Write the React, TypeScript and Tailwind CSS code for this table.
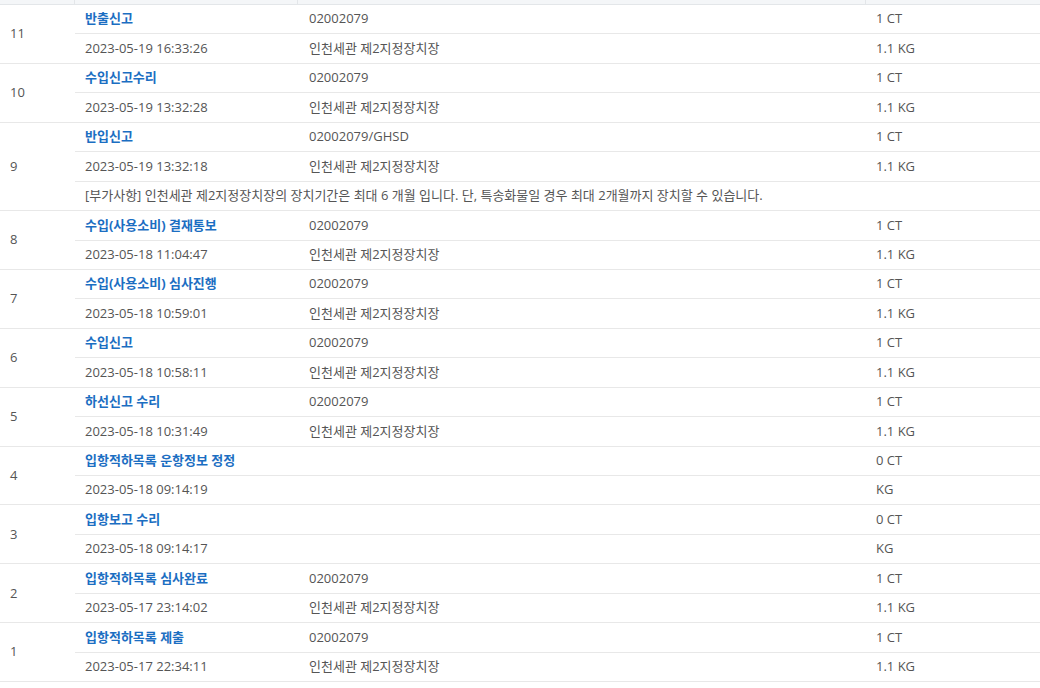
type Row = {
  no: number;
  title: string;
  hbl: string;
  pkg: string;
  date: string;
  place: string;
  weight: string;
  note?: string;
};

const PLACE = '인천세관 제2지정장치장';

const rows: Row[] = [
  { no: 11, title: '반출신고', hbl: '02002079', pkg: '1 CT', date: '2023-05-19 16:33:26', place: PLACE, weight: '1.1 KG' },
  { no: 10, title: '수입신고수리', hbl: '02002079', pkg: '1 CT', date: '2023-05-19 13:32:28', place: PLACE, weight: '1.1 KG' },
  {
    no: 9,
    title: '반입신고',
    hbl: '02002079/GHSD',
    pkg: '1 CT',
    date: '2023-05-19 13:32:18',
    place: PLACE,
    weight: '1.1 KG',
    note: '[부가사항] 인천세관 제2지정장치장의 장치기간은 최대 6 개월 입니다. 단, 특송화물일 경우 최대 2개월까지 장치할 수 있습니다.',
  },
  { no: 8, title: '수입(사용소비) 결재통보', hbl: '02002079', pkg: '1 CT', date: '2023-05-18 11:04:47', place: PLACE, weight: '1.1 KG' },
  { no: 7, title: '수입(사용소비) 심사진행', hbl: '02002079', pkg: '1 CT', date: '2023-05-18 10:59:01', place: PLACE, weight: '1.1 KG' },
  { no: 6, title: '수입신고', hbl: '02002079', pkg: '1 CT', date: '2023-05-18 10:58:11', place: PLACE, weight: '1.1 KG' },
  { no: 5, title: '하선신고 수리', hbl: '02002079', pkg: '1 CT', date: '2023-05-18 10:31:49', place: PLACE, weight: '1.1 KG' },
  { no: 4, title: '입항적하목록 운항정보 정정', hbl: '', pkg: '0 CT', date: '2023-05-18 09:14:19', place: '', weight: 'KG' },
  { no: 3, title: '입항보고 수리', hbl: '', pkg: '0 CT', date: '2023-05-18 09:14:17', place: '', weight: 'KG' },
  { no: 2, title: '입항적하목록 심사완료', hbl: '02002079', pkg: '1 CT', date: '2023-05-17 23:14:02', place: PLACE, weight: '1.1 KG' },
  { no: 1, title: '입항적하목록 제출', hbl: '02002079', pkg: '1 CT', date: '2023-05-17 22:34:11', place: PLACE, weight: '1.1 KG' },
];

// the last sub-row of a group is 1px shorter: the group's own bottom border takes that pixel
function SubRow({ cells, last, blue }: { cells: string[]; last?: boolean; blue?: boolean }) {
  return (
    <div className={`flex items-center ${last ? 'h-[28.45px]' : 'h-[29.45px] border-b border-[#e8e8e8]'}`}>
      <div className={`w-[223px] shrink-0 pl-[10px] ${blue ? 'font-bold text-[#1b6ec2]' : ''}`}>{cells[0]}</div>
      <div className="w-[568px] shrink-0 pl-[11px]">{cells[1]}</div>
      <div className="flex-1 pl-[10px]">{cells[2]}</div>
    </div>
  );
}

export default function App() {
  return (
    <div
      className="w-[1040px] h-[688px] overflow-hidden bg-white text-[13px] text-[#555]"
      style={{ fontFamily: '"Open Sans", "Noto Sans CJK KR", sans-serif' }}
    >
      {/* header bottom edge */}
      <div className="flex h-[5px] bg-[#f4f6f8] border-b border-[#e3e6e9]">
        <div className="w-[75px] border-r border-[#e3e6e9]" />
        <div className="w-[223px] border-r border-[#e3e6e9]" />
        <div className="w-[568px] border-r border-[#e3e6e9]" />
        <div className="flex-1" />
      </div>

      {rows.map((r) => (
        <div key={r.no} className="flex border-b border-[#e8e8e8]">
          <div className="w-[75px] shrink-0 flex items-center pl-[10px]">{r.no}</div>
          <div className="flex-1 flex flex-col">
            <SubRow cells={[r.title, r.hbl, r.pkg]} blue />
            <SubRow cells={[r.date, r.place, r.weight]} last={!r.note} />
            {r.note && (
              <div className="flex h-[28.45px] items-center pl-[10px]">{r.note}</div>
            )}
          </div>
        </div>
      ))}
    </div>
  );
}
